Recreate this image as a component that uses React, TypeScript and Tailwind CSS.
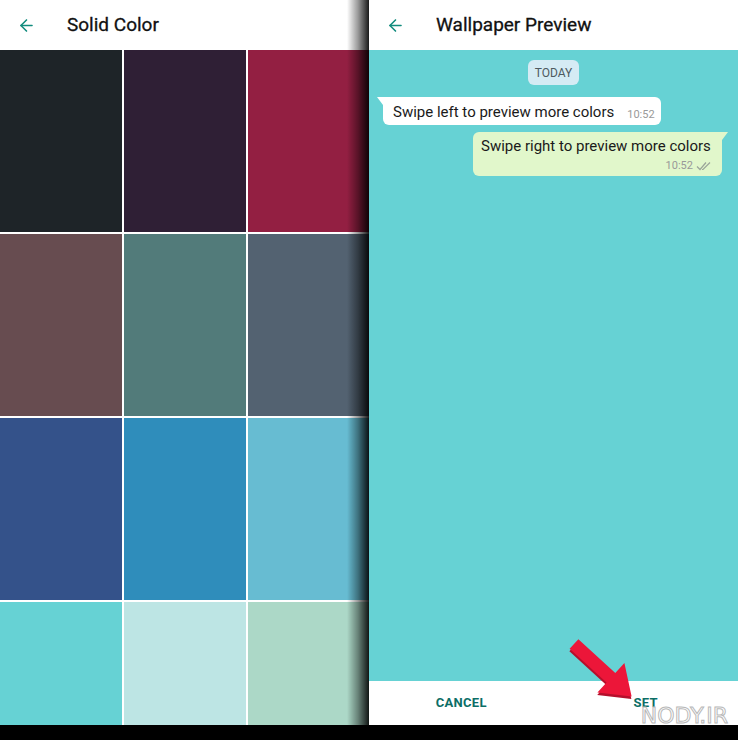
import { ArrowLeft } from 'lucide-react';

const swatches = [
  'bg-[#1e2428]', 'bg-[#2f1f35]', 'bg-[#931f42]',
  'bg-[#674c50]', 'bg-[#527b7a]', 'bg-[#536271]',
  'bg-[#34528a]', 'bg-[#2f8dbb]', 'bg-[#67bcd2]',
  'bg-[#66d2d4]', 'bg-[#bde5e4]', 'bg-[#acd8c7]',
];

function Header({ title }: { title: string }) {
  return (
    <div className="h-[50px] bg-white flex items-center shrink-0">
      <ArrowLeft className="ml-[17px] text-[#128c7e]" size={19} strokeWidth={2} />
      <span className="ml-[31px] text-[19px] font-normal text-[#111] [-webkit-text-stroke:0.3px_#111]">{title}</span>
    </div>
  );
}

function DoubleCheck() {
  return (
    <svg width="16" height="10" viewBox="0 0 16 10" fill="none" stroke="#9aa59a" strokeWidth="1.2">
      <path d="M1 5.5 L4 8.5 L10 1.5" />
      <path d="M6 8.5 L7 8.5 L14 1.5" />
    </svg>
  );
}

export default function App() {
  return (
    <div className="w-[738px] h-[740px] flex flex-col bg-black overflow-hidden font-['Roboto',sans-serif]">
      <div className="flex h-[725px]">
        {/* Solid colour picker */}
        <div className="relative w-[369px] flex flex-col bg-white overflow-hidden">
          <Header title="Solid Color" />
          <div className="grid grid-cols-[122px_122px_122px] grid-rows-[182px_182px_182px_123px] gap-[2px] flex-1">
            {swatches.map((c, i) => (
              <div key={i} className={c} />
            ))}
          </div>
          <div className="absolute right-0 top-0 bottom-0 w-[22px] bg-gradient-to-r from-transparent via-black/40 to-black/90" />
        </div>

        {/* Wallpaper preview */}
        <div className="relative flex-1 flex flex-col bg-[#66d2d4]">
          <Header title="Wallpaper Preview" />
          <div className="flex-1 flex flex-col px-[14px]">
            <div className="self-center mt-[10px] bg-[#d5ebf4] rounded-[6px] px-[7px] h-[25px] flex items-center text-[12px] text-[#4e5a60]">
              TODAY
            </div>

            <div className="relative self-start mt-[12px] bg-white rounded-[6px] rounded-tl-none h-[28px] flex items-end pl-[10px] pr-[6px] pb-[4px]">
              <div className="absolute -left-[6px] top-0 w-0 h-0 border-t-[8px] border-t-white border-l-[6px] border-l-transparent" />
              <span className="text-[15px] text-[#1a1a1a] leading-[18px]">Swipe left to preview more colors</span>
              <span className="ml-[13px] text-[11px] text-[#999] leading-[12px]">10:52</span>
            </div>

            <div className="relative self-end mt-[7px] mr-[2px] bg-[#e1f7cb] rounded-[6px] rounded-tr-none w-[249px] h-[44px] flex flex-col pl-[8px] pr-[10px] pt-[5px]">
              <div className="absolute -right-[6px] top-0 w-0 h-0 border-t-[8px] border-t-[#e1f7cb] border-r-[6px] border-r-transparent" />
              <span className="text-[15px] text-[#1a1a1a] leading-[18px]">Swipe right to preview more colors</span>
              <div className="self-end flex items-center gap-[3px] mt-[5px]">
                <span className="text-[11px] text-[#999] leading-[12px]">10:52</span>
                <DoubleCheck />
              </div>
            </div>
          </div>
          <div className="h-[44px] bg-white flex items-center text-[13px] font-bold text-[#0c6e66] tracking-[0.3px]">
            <div className="flex-1 text-center">CANCEL</div>
            <div className="flex-1 text-center">SET</div>
          </div>

          {/* red annotation arrow */}
          <svg className="absolute left-[191px] top-[630px]" width="90" height="80" viewBox="0 0 90 80">
            <g transform="translate(14 14) rotate(42.4)">
              <polygon points="0,-6.5 50,-6.5 50,-20 78,0 50,20 50,6.5 0,6.5" fill="#b5102c" transform="translate(1.5 2)" />
              <polygon points="0,-6.5 50,-6.5 50,-20 78,0 50,20 50,6.5 0,6.5" fill="#ec1639" />
            </g>
          </svg>

          {/* watermark */}
          <div className="absolute right-[10px] bottom-[-3px] text-[22px] leading-[24px] font-['DejaVu_Sans',sans-serif] text-transparent [-webkit-text-stroke:1px_#b8b8b8]">
            NODY.IR
          </div>
        </div>
      </div>
      <div className="h-[15px] bg-black" />
    </div>
  );
}
